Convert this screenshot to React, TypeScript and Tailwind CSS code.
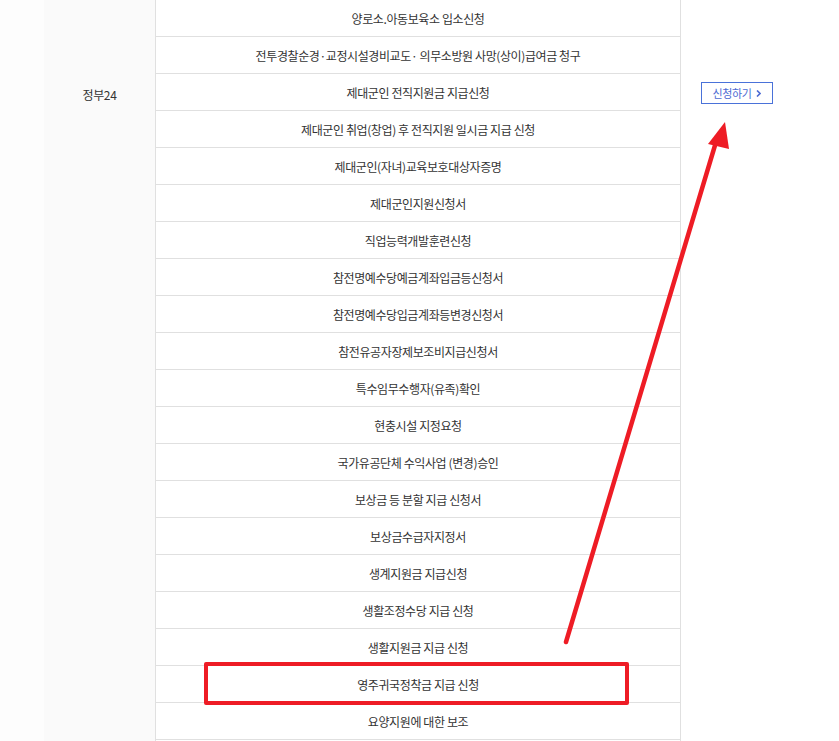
import React from "react";

const rows = [
  "양로소.아동보육소 입소신청",
  "전투경찰순경·교정시설경비교도· 의무소방원 사망(상이)급여금 청구",
  "제대군인 전직지원금 지급신청",
  "제대군인 취업(창업) 후 전직지원 일시금 지급 신청",
  "제대군인(자녀)교육보호대상자증명",
  "제대군인지원신청서",
  "직업능력개발훈련신청",
  "참전명예수당예금계좌입금등신청서",
  "참전명예수당입금계좌등변경신청서",
  "참전유공자장제보조비지급신청서",
  "특수임무수행자(유족)확인",
  "현충시설 지정요청",
  "국가유공단체 수익사업 (변경)승인",
  "보상금 등 분할 지급 신청서",
  "보상금수급자지정서",
  "생계지원금 지급신청",
  "생활조정수당 지급 신청",
  "생활지원금 지급 신청",
  "영주귀국정착금 지급 신청",
  "요양지원에 대한 보조",
];

const font = {
  fontFamily: '"Noto Sans CJK KR", "Noto Sans", sans-serif',
};

export default function App() {
  return (
    <div
      className="relative w-[839px] h-[741px] overflow-hidden bg-white flex text-[12px] text-[#333]"
      style={font}
    >
      <div className="w-[44px] shrink-0 bg-[#fdfdfd]" />
      <div className="w-[112px] shrink-0 bg-[#fafafa] border-r border-[#e0e0e0] flex justify-center pt-[86px]">
        <span className="leading-[18px] tracking-[-0.3px]">정부24</span>
      </div>
      <div className="w-[525px] shrink-0 border-r border-[#e0e0e0] flex flex-col">
        {rows.map((row) => (
          <div
            key={row}
            className="h-[37px] shrink-0 border-b border-[#e0e0e0] flex items-center justify-center pt-[1px] tracking-[-0.4px]"
          >
            {row}
          </div>
        ))}
      </div>
      <div className="flex-1 pl-[20px] pt-[82px]">
        <button className="w-[72px] h-[22px] border border-[#4a72d9] bg-white text-[#4d6bd3] text-[11px] flex items-center justify-center gap-[5px] tracking-[-0.4px]">
          신청하기
          <svg width="5" height="7" viewBox="0 0 5 7">
            <path d="M1 0.5 L4 3.5 L1 6.5" fill="none" stroke="#4d6bd3" strokeWidth="1.6" />
          </svg>
        </button>
      </div>

      {/* red annotation box */}
      <div className="absolute left-[204px] top-[662px] w-[425px] h-[43px] border-[4px] border-[#ee1c25] rounded-[2px]" />

      {/* red annotation arrow */}
      <svg className="absolute inset-0 pointer-events-none" width="839" height="741">
        <line x1="566" y1="642" x2="716" y2="142" stroke="#ee1c25" strokeWidth="4.5" strokeLinecap="round" />
        <polygon points="725,122 708,144 729,149" fill="#ee1c25" />
      </svg>
    </div>
  );
}
